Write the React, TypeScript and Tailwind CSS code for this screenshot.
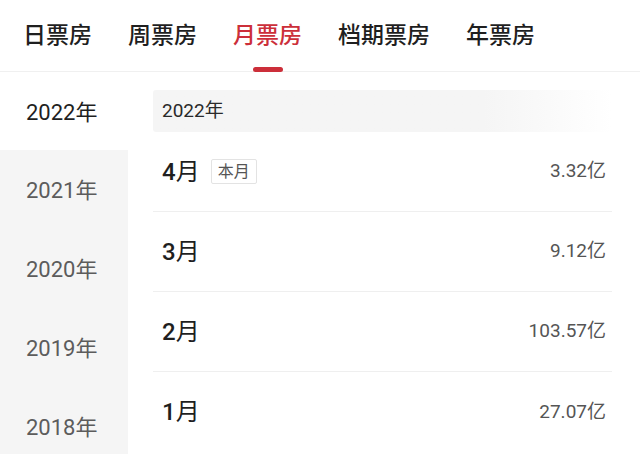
import React from 'react'

const TABS = ['日票房', '周票房', '月票房', '档期票房', '年票房']
const YEARS = ['2022年', '2021年', '2020年', '2019年', '2018年']
const MONTHS = [
  { n: '4', v: '3.32亿', current: true },
  { n: '3', v: '9.12亿' },
  { n: '2', v: '103.57亿' },
  { n: '1', v: '27.07亿' },
]

const FONT = { fontFamily: 'Roboto, "Noto Sans CJK SC", sans-serif' }

export default function App() {
  const active = 2
  return (
    <div className="w-[640px] h-[454px] overflow-hidden bg-white" style={FONT}>
      {/* tabs */}
      <div className="relative h-[72px] border-b border-[#f0f0f0] flex items-start pl-[23px] gap-[36px] pt-[18px] whitespace-nowrap">
        {TABS.map((t, i) => (
          <div key={t} className="relative shrink-0">
            <span
              className={`text-[23px] leading-[36px] font-medium ${
                i === active ? 'text-[#cc2f3a]' : 'text-[#1f1f1f]'
              }`}
            >
              {t}
            </span>
            {i === active && (
              <div className="absolute left-1/2 -translate-x-1/2 top-[49px] w-[30px] h-[5px] rounded-full bg-[#cc2f3a]" />
            )}
          </div>
        ))}
      </div>

      <div className="flex">
        {/* year sidebar */}
        <div className="w-[128px] shrink-0 bg-[#f5f5f5]">
          {YEARS.map((y, i) => (
            <div
              key={y}
              className={`pl-[26px] flex items-center text-[22px] ${
                i === 0
                  ? 'h-[78px] bg-white text-[#1f1f1f]'
                  : 'h-[79px] text-[#5c5c5c]'
              } ${i === 1 ? 'rounded-tr-[12px]' : ''} ${i === 0 ? 'pt-[2px]' : 'pt-[1px]'}`}
            >
              {y}
            </div>
          ))}
        </div>

        {/* months */}
        <div className="flex-1 pl-[25px] pr-[28px] pt-[18px]">
          <div className="h-[42px] flex items-center pl-[9px] text-[19px] text-[#2a2a2a] rounded-[3px] bg-gradient-to-r from-[#f5f5f5] from-[72%] to-white">
            2022年
          </div>
          {MONTHS.map((r, i) => (
            <div
              key={r.n}
              className={`h-[80px] flex items-center justify-between pl-[9px] pr-[6px] ${
                i < MONTHS.length - 1 ? 'border-b border-[#efefef]' : ''
              }`}
            >
              <div className="flex items-center gap-[11px]">
                <span className="text-[24px] text-[#1f1f1f]">
                  <span className="font-medium">{r.n}</span>月
                </span>
                {r.current && (
                  <span className="h-[25px] px-[6px] flex items-center border border-[#e3e3e3] rounded-[2px] text-[16px] text-[#555]">
                    本月
                  </span>
                )}
              </div>
              <span className="text-[19px] text-[#555]">{r.v}</span>
            </div>
          ))}
        </div>
      </div>
    </div>
  )
}
